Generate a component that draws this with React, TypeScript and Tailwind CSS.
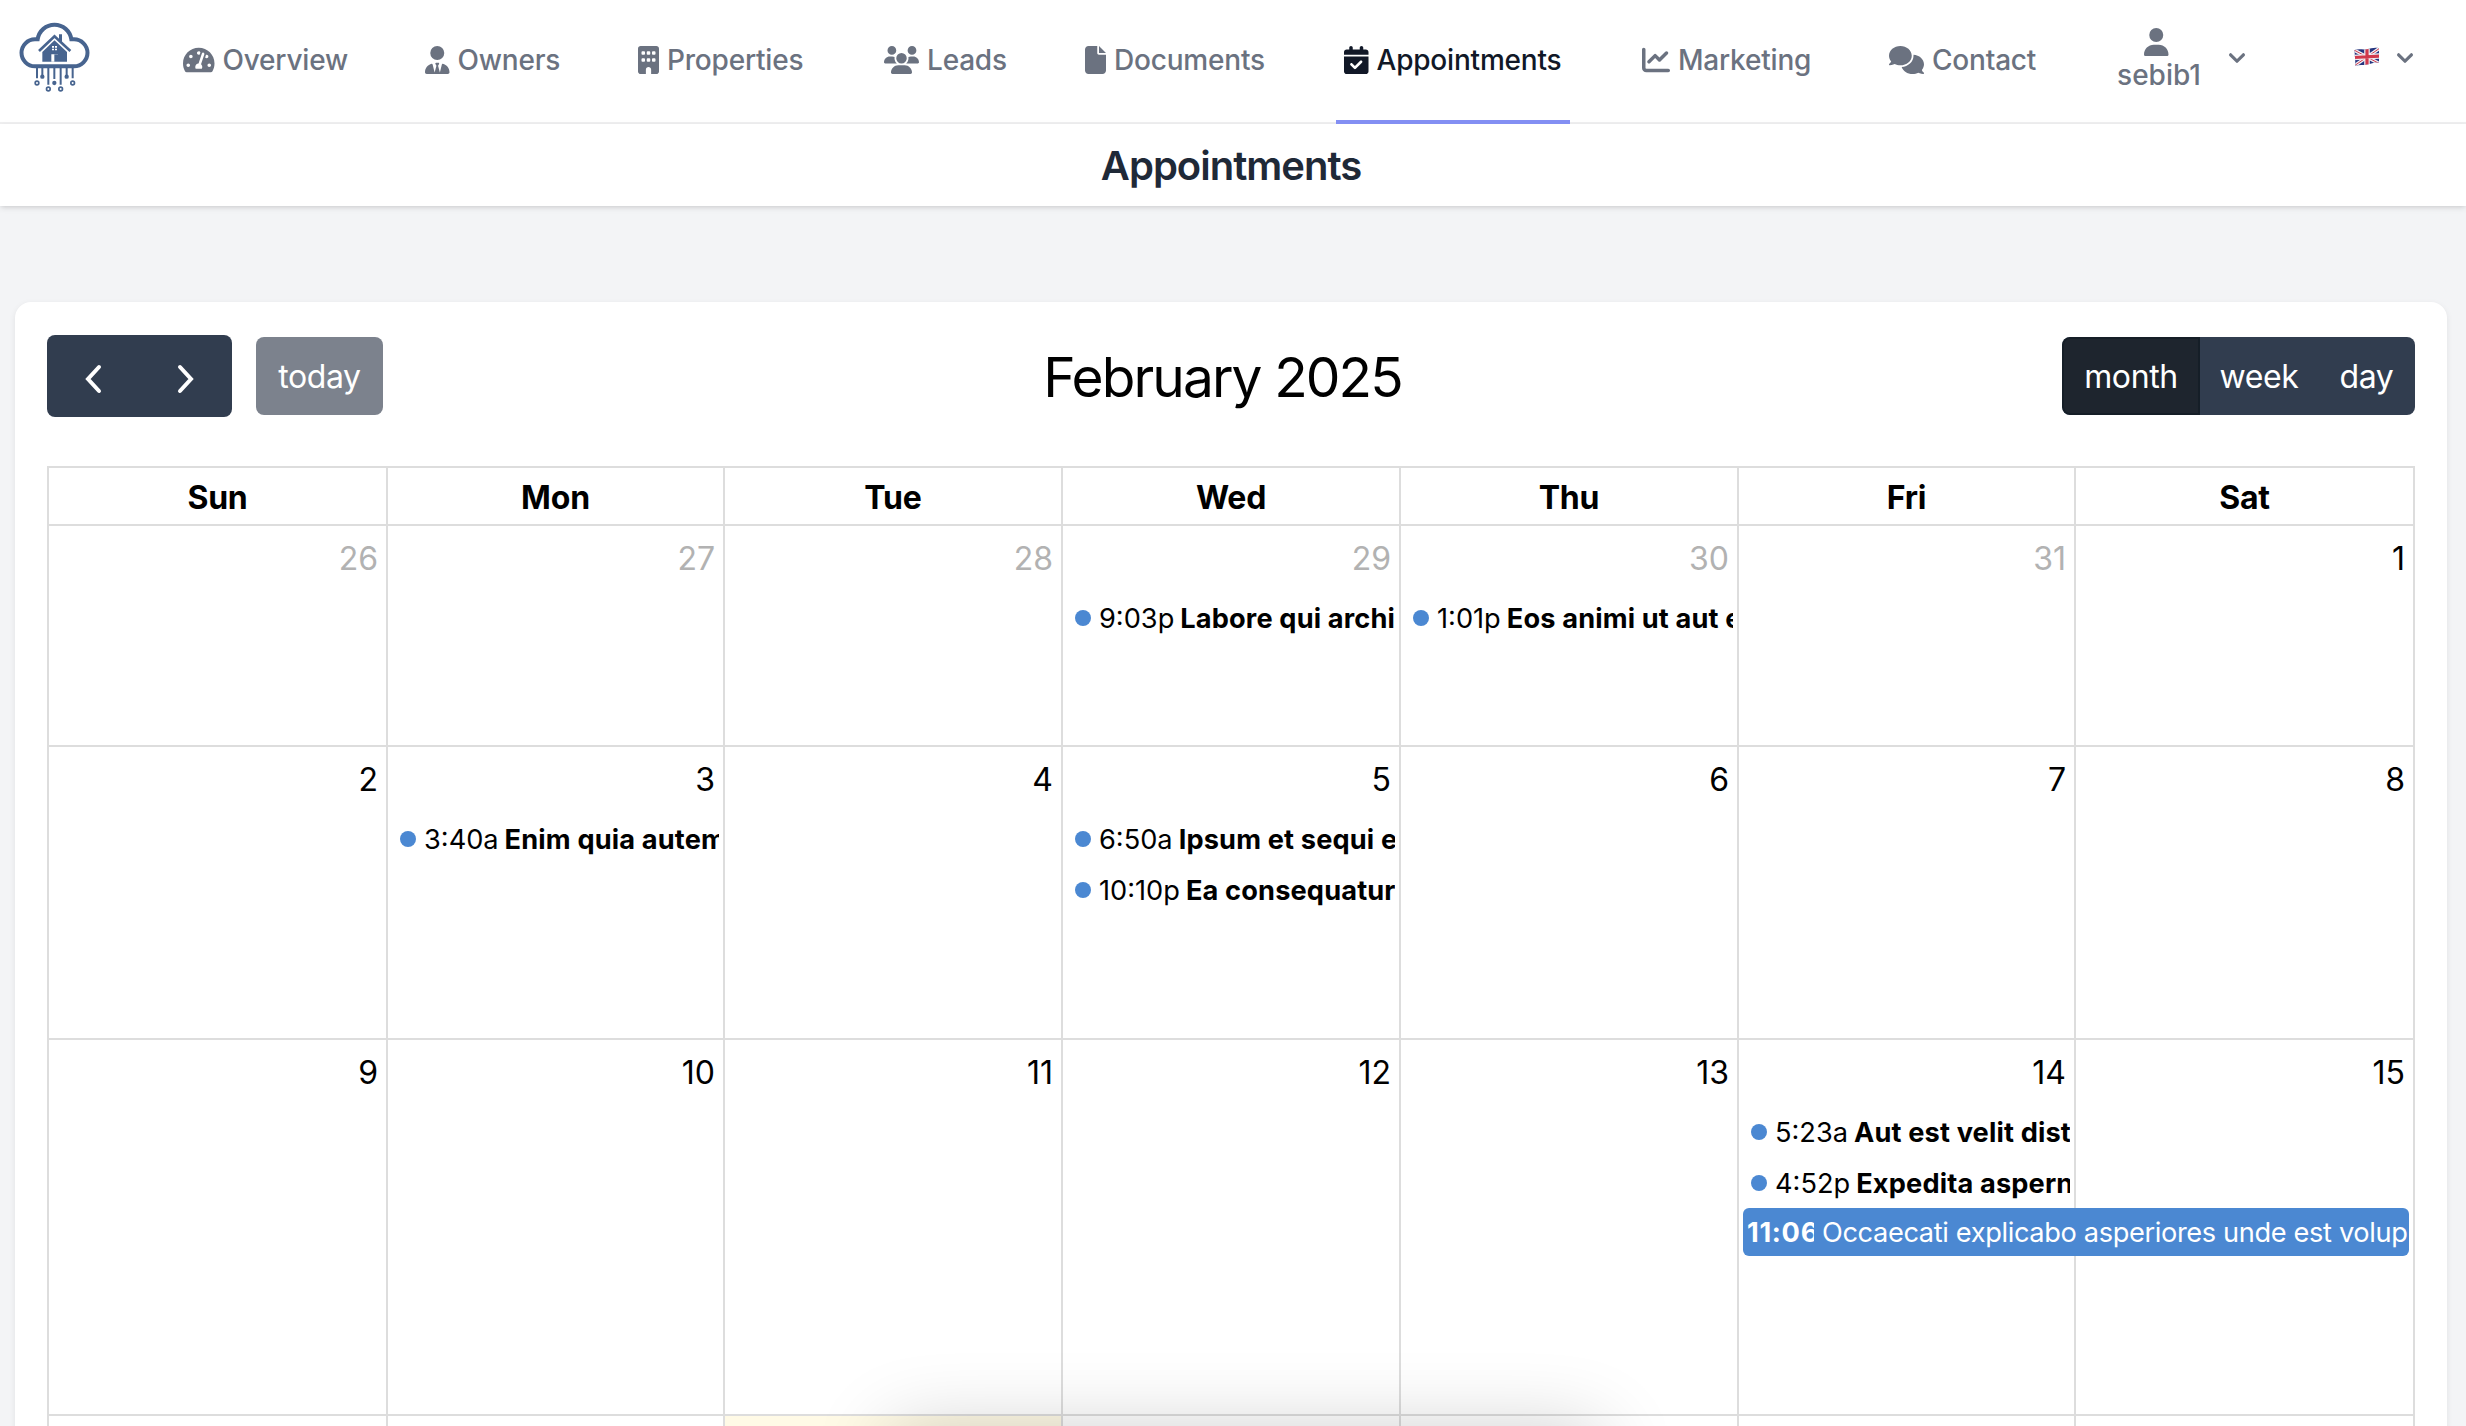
import * as React from "react"
import { FaTachometerAlt } from "react-icons/fa"
import {
  FaBuilding,
  FaCalendarCheck,
  FaChartLine,
  FaComments,
  FaFile,
  FaUser,
  FaUserTie,
  FaUsers,
} from "react-icons/fa6"

const navItems = [
  { icon: FaTachometerAlt, label: "Overview", iconWidth: "w-[31.5px]", width: "w-[178px]" },
  { icon: FaUserTie, label: "Owners", iconWidth: "w-[24.5px]", width: "w-[149px]" },
  { icon: FaBuilding, label: "Properties", iconWidth: "w-[21px]", width: "w-[182px]" },
  { icon: FaUsers, label: "Leads", iconWidth: "w-[35px]", width: "w-[137px]" },
  { icon: FaFile, label: "Documents", iconWidth: "w-[21px]", width: "w-[195px]" },
  { icon: FaCalendarCheck, label: "Appointments", iconWidth: "w-[24.5px]", width: "w-[234px]", active: true },
  { icon: FaChartLine, label: "Marketing", iconWidth: "w-[28px]", width: "w-[183px]" },
  { icon: FaComments, label: "Contact", iconWidth: "w-[35px]", width: "w-[164px]" },
]

const weekDays = ["Sun", "Mon", "Tue", "Wed", "Thu", "Fri", "Sat"]

type CalendarEvent = { time: string; title: string; block?: boolean }
type Day = { date: number; other?: boolean; today?: boolean; events?: CalendarEvent[] }

const weeks: { height: string; days: Day[] }[] = [
  {
    height: "h-[221px]",
    days: [
      { date: 26, other: true },
      { date: 27, other: true },
      { date: 28, other: true },
      { date: 29, other: true, events: [{ time: "9:03p", title: "Labore qui archi" }] },
      { date: 30, other: true, events: [{ time: "1:01p", title: "Eos animi ut aut e" }] },
      { date: 31, other: true },
      { date: 1 },
    ],
  },
  {
    height: "h-[293px]",
    days: [
      { date: 2 },
      { date: 3, events: [{ time: "3:40a", title: "Enim quia autem" }] },
      { date: 4 },
      {
        date: 5,
        events: [
          { time: "6:50a", title: "Ipsum et sequi e" },
          { time: "10:10p", title: "Ea consequatur" },
        ],
      },
      { date: 6 },
      { date: 7 },
      { date: 8 },
    ],
  },
  {
    height: "h-[376px]",
    days: [
      { date: 9 },
      { date: 10 },
      { date: 11 },
      { date: 12 },
      { date: 13 },
      {
        date: 14,
        events: [
          { time: "5:23a", title: "Aut est velit dist" },
          { time: "4:52p", title: "Expedita aspern" },
          { time: "11:06", title: "Occaecati explicabo asperiores unde est volup", block: true },
        ],
      },
      { date: 15 },
    ],
  },
  {
    height: "h-[376px]",
    days: [
      { date: 16 },
      { date: 17 },
      { date: 18, today: true },
      { date: 19 },
      { date: 20 },
      { date: 21 },
      { date: 22 },
    ],
  },
]

function Logo() {
  return (
    <svg viewBox="0 0 270 270" className="size-[90px] shrink-0" fill="none" stroke="#47648f">
      <path
        d="M75 172A40.5 40.5 0 0 1 75 91H83A51 51 0 0 1 184 91H192A40.5 40.5 0 0 1 192 172Z"
        strokeWidth="12"
      />
      <path d="M87 126L133.500 82L181 126" strokeWidth="8" />
      <path d="M147 76H156V100L147 92Z" fill="#47648f" stroke="none" />
      <path d="M133.500 94L171 129V158H97V129Z" fill="#47648f" stroke="none" />
      <path d="M126 111H132V116H126ZM135 111H141V116H135ZM126 119H132V124H126ZM135 119H141V124H135ZM124 136H144V158H124Z" fill="#fff" stroke="none" />
      <path d="M133 136H144V158H133Z" fill="#47648f" stroke="none" />
      <path d="M81 176V208M97 176V200M115 176V227M133 176V210M152 176V227M170 176V200M188 176V208" strokeWidth="6" />
      <g fill="#47648f" stroke="none">
        <circle cx="97" cy="203" r="6.500" />
        <circle cx="133" cy="222" r="6.500" />
        <circle cx="170" cy="203" r="6.500" />
      </g>
      <g strokeWidth="5">
        <circle cx="81" cy="222" r="5.500" />
        <circle cx="115" cy="240" r="5.500" />
        <circle cx="152" cy="240" r="5.500" />
        <circle cx="188" cy="222" r="5.500" />
      </g>
    </svg>
  )
}

function ChevronDown() {
  return (
    <svg viewBox="0 0 20 20" className="size-8 shrink-0" fill="currentColor">
      <path
        fillRule="evenodd"
        clipRule="evenodd"
        d="M5.293 7.293a1 1 0 011.414 0L10 10.586l3.293-3.293a1 1 0 111.414 1.414l-4 4a1 1 0 01-1.414 0l-4-4a1 1 0 010-1.414z"
      />
    </svg>
  )
}

function Flag() {
  return (
    <svg viewBox="0 0 26 20" className="mb-[3px] h-5 w-[26px] shrink-0">
      <defs>
        <clipPath id="flag">
          <path d="M0.500 3C5 1.500 9 3 13 2.200S21 0 25 1.200V15.500C21 15 17 16.500 13 17.500S5 17.500 1.500 19Z" />
        </clipPath>
      </defs>
      <g clipPath="url(#flag)">
        <rect width="26" height="20" fill="#25357f" />
        <path d="M0 3L26 17M0 19L26 1" stroke="#f0eef2" strokeWidth="3.400" />
        <path d="M0 3L26 17M0 19L26 1" stroke="#d0394c" strokeWidth="1" />
        <path d="M13 0V20M0 10.500L26 9" stroke="#f0eef2" strokeWidth="5.600" />
        <path d="M13 0V20M0 10.500L26 9" stroke="#d0394c" strokeWidth="3.200" />
      </g>
    </svg>
  )
}

function NavBar() {
  return (
    <nav className="flex h-[124px] border-b-2 border-[#f0f0f1] bg-white pl-[10px] text-[28px] font-medium text-[#6b7280]">
      <div className="w-[165px] pt-[9px]">
        <Logo />
      </div>
      <div className="flex h-[124px] gap-16">
        {navItems.map(({ icon: Icon, label, iconWidth, width, active }) => (
          <a
            key={label}
            className={`flex shrink-0 items-center gap-2 whitespace-nowrap border-b-4 pl-2 leading-[40px] tracking-[-0.2px] ${width} ${active ? "border-[#838ff3] text-[#111827]" : "border-transparent"}`}
          >
            <Icon className={`h-7 shrink-0 ${iconWidth}`} />
            {label}
          </a>
        ))}
      </div>
      <div className="ml-[73px] flex h-[116px] items-center">
        <div className="flex w-[82px] flex-col items-center pt-[5px]">
          <FaUser className="mr-[5px] h-7 w-[24.5px]" />
          <span className="mt-px leading-[36px]">sebib1</span>
        </div>
        <div className="ml-[21px]">
          <ChevronDown />
        </div>
      </div>
      <div className="ml-[101px] flex h-[116px] items-center gap-[9px]">
        <Flag />
        <ChevronDown />
      </div>
    </nav>
  )
}

function Toolbar() {
  return (
    <div className="flex h-[82px] items-center justify-between text-[32px] leading-[48px] tracking-[-0.4px] text-white">
      <div className="flex items-center gap-6">
        <div className="flex h-[82px] w-[185px] rounded-[8px] bg-[#313d4f]">
          <button className="flex flex-1 items-center justify-center">
            <svg viewBox="0 0 18 30" className="mt-[6px] h-[30px] w-[18px]" fill="none" stroke="currentColor" strokeWidth="4" strokeLinecap="round">
              <path d="M15 3L4 15L15 27" />
            </svg>
          </button>
          <button className="flex flex-1 items-center justify-center">
            <svg viewBox="0 0 18 30" className="mt-[6px] h-[30px] w-[18px]" fill="none" stroke="currentColor" strokeWidth="4" strokeLinecap="round">
              <path d="M3 3L14 15L3 27" />
            </svg>
          </button>
        </div>
        <button className="h-[78px] w-[127px] rounded-[8px] bg-[#7c828d] pt-[2px]">today</button>
      </div>
      <h2 className="pt-[2px] text-[55px] leading-[66px] tracking-[-1.9px] text-black">February 2025</h2>
      <div className="flex h-[78px] overflow-hidden rounded-[8px] bg-[#313d4f]">
        <button className="w-[138px] rounded-l-[8px] border-2 border-[#151e27] bg-[#1e252e] pt-[2px]">month</button>
        <button className="w-[118px] pt-[2px]">week</button>
        <button className="w-[97px] pt-[2px]">day</button>
      </div>
    </div>
  )
}

function EventRow({ time, title, block }: CalendarEvent) {
  // multi-day events lie over the next day's cell
  if (block) {
    return (
      <div className="relative z-10 -mt-px ml-[4px] flex h-12 w-[666px] items-center overflow-hidden rounded-[6px] bg-[#4b88d2] pt-px pl-1 text-white">
        <span className="mr-2 w-[67px] shrink-0 overflow-hidden font-bold tracking-[0.7px]">{time}</span>
        <span className="shrink-0 tracking-[-0.36px]">{title}</span>
      </div>
    )
  }
  return (
    <div className="mr-1 mb-px ml-[4px] flex h-[50px] items-center overflow-hidden">
      <span className="mr-2 ml-2 size-4 shrink-0 rounded-full bg-[#4b88d2]" />
      <span className="mr-[6px] pt-px">{time}</span>
      <span className="pt-px font-bold tracking-[0.15px]">{title}</span>
    </div>
  )
}

const columns = "grid grid-cols-[339px_337px_338px_338px_338px_337px_339px]"

function Calendar() {
  return (
    <div className="mt-[49px] border-t-2 border-l-2 border-[#ddd] text-[32px] text-black">
      <div className={`${columns} h-[58px] border-b-2 border-[#ddd]`}>
        {weekDays.map((day) => (
          <div key={day} className="border-r-2 border-[#ddd] text-center leading-[59px] font-bold tracking-[-0.2px]">
            {day}
          </div>
        ))}
      </div>
      {weeks.map((week, i) => (
        <div key={i} className={`${columns} border-b-2 border-[#ddd] ${week.height}`}>
          {week.days.map((day) => (
            <div key={day.date} className={`min-w-0 border-r-2 border-[#ddd] ${day.today ? "bg-[#fffae6]" : ""}`}>
              <div className={`h-[67px] pr-2 text-right leading-[66px] ${day.other ? "text-[#b2b2b2]" : ""}`}>
                {day.date}
              </div>
              <div className="text-[27.2px] leading-[40px] whitespace-nowrap">
                {day.events?.map((event) => <EventRow key={event.time} {...event} />)}
              </div>
            </div>
          ))}
        </div>
      ))}
    </div>
  )
}

export default function App() {
  return (
    <div className="relative h-[1426px] w-[2466px] overflow-hidden bg-[#f3f4f6] font-['Inter',sans-serif]">
      <NavBar />
      <header className="flex h-[82px] items-center justify-center bg-white pt-[2px] pr-1 shadow-[0_2px_6px_rgba(0,0,0,0.1),0_2px_4px_-2px_rgba(0,0,0,0.1)]">
        <h1 className="text-[40px] leading-[56px] font-semibold tracking-[-1px] text-[#1f2937]">Appointments</h1>
      </header>
      <main className="mt-24 ml-[15px] w-[2432px] rounded-2xl bg-white px-8 pt-[33px] shadow-[0_2px_6px_rgba(0,0,0,0.08)]">
        <Toolbar />
        <Calendar />
      </main>
      <div className="absolute top-[1430px] left-[890px] h-[100px] w-[710px] shadow-[0_0_80px_rgba(0,0,0,0.2)]" />
    </div>
  )
}
